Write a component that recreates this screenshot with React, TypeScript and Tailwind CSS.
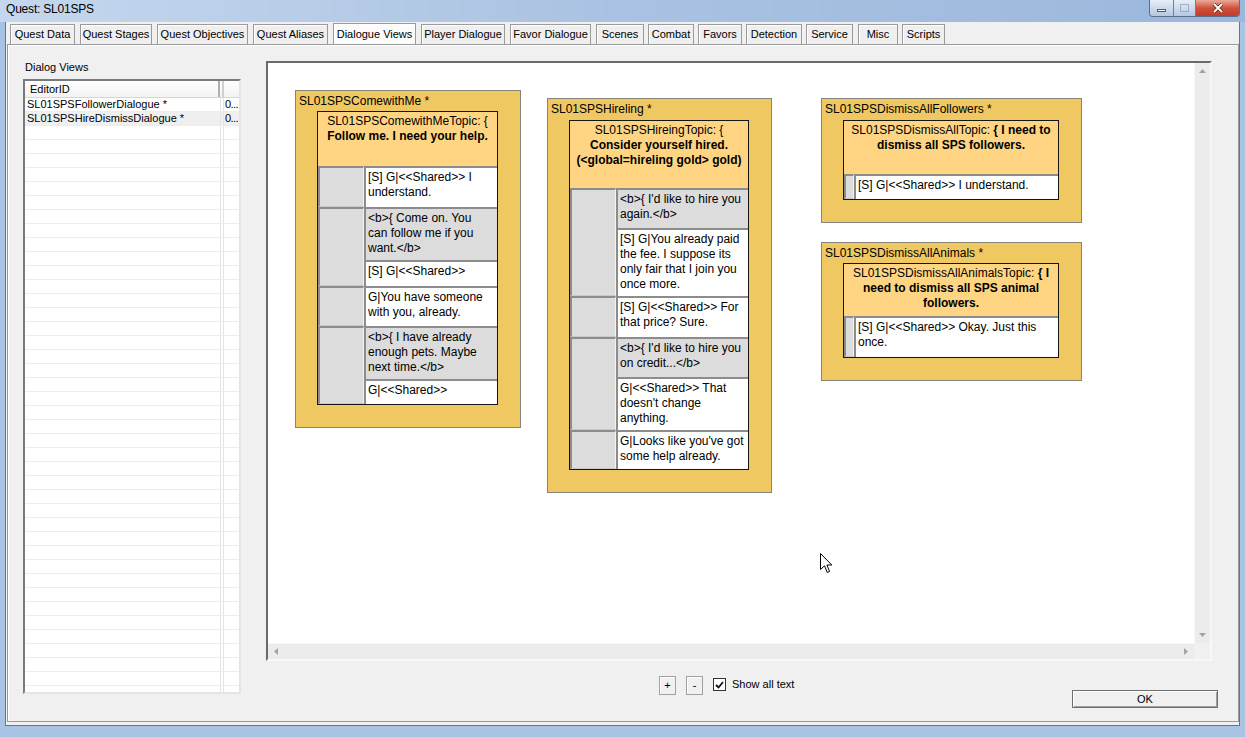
import React from "react";

type Seg = { t: string; b?: boolean };
type Cell = { lines: string[]; h: number; player?: boolean };
type DNode = {
  title: string;
  x: number;
  y: number;
  w: number;
  titleH: number;
  headerH: number;
  header: Seg[][];
  gutter: number;
  groups: Cell[][];
};

const nodes: DNode[] = [
  {
    title: "SL01SPSComewithMe *",
    x: 27,
    y: 27,
    w: 226,
    titleH: 20,
    headerH: 54,
    gutter: 46,
    header: [
      [{ t: "SL01SPSComewithMeTopic: {" }],
      [{ t: "Follow me. I need your help.", b: true }],
    ],
    groups: [
      [{ lines: ["[S] G|<<Shared>> I", "understand."], h: 41 }],
      [
        { lines: ["<b>{ Come on. You", "can follow me if you", "want.</b>"], h: 53, player: true },
        { lines: ["[S] G|<<Shared>>"], h: 26 },
      ],
      [{ lines: ["G|You have someone", "with you, already."], h: 40 }],
      [
        { lines: ["<b>{ I have already", "enough pets. Maybe", "next time.</b>"], h: 53, player: true },
        { lines: ["G|<<Shared>>"], h: 25 },
      ],
    ],
  },
  {
    title: "SL01SPSHireling *",
    x: 279,
    y: 35,
    w: 225,
    titleH: 21,
    headerH: 67,
    gutter: 46,
    header: [
      [{ t: "SL01SPSHireingTopic: {" }],
      [{ t: "Consider yourself hired.", b: true }],
      [{ t: "(<global=hireling gold> gold)", b: true }],
    ],
    groups: [
      [
        { lines: ["<b>{ I'd like to hire you", "again.</b>"], h: 40, player: true },
        {
          lines: ["[S] G|You already paid", "the fee. I suppose its", "only fair that I join you", "once more."],
          h: 68,
        },
      ],
      [{ lines: ["[S] G|<<Shared>> For", "that price? Sure."], h: 41 }],
      [
        { lines: ["<b>{ I'd like to hire you", "on credit...</b>"], h: 40, player: true },
        { lines: ["G|<<Shared>> That", "doesn't change", "anything."], h: 53 },
      ],
      [{ lines: ["G|Looks like you've got", "some help already."], h: 39 }],
    ],
  },
  {
    title: "SL01SPSDismissAllFollowers *",
    x: 553,
    y: 35,
    w: 261,
    titleH: 21,
    headerH: 53,
    gutter: 10,
    header: [
      [{ t: "SL01SPSDismissAllTopic: " }, { t: "{ I need to", b: true }],
      [{ t: "dismiss all SPS followers.", b: true }],
    ],
    groups: [[{ lines: ["[S] G|<<Shared>> I understand."], h: 25 }]],
  },
  {
    title: "SL01SPSDismissAllAnimals *",
    x: 553,
    y: 179,
    w: 261,
    titleH: 20,
    headerH: 52,
    gutter: 10,
    header: [
      [{ t: "SL01SPSDismissAllAnimalsTopic: " }, { t: "{ I", b: true }],
      [{ t: "need to dismiss all SPS animal", b: true }],
      [{ t: "followers.", b: true }],
    ],
    groups: [[{ lines: ["[S] G|<<Shared>> Okay. Just this", "once."], h: 41 }]],
  },
];

const tabs: { label: string; w: number; ml: number; active?: boolean }[] = [
  { label: "Quest Data", w: 65, ml: 3 },
  { label: "Quest Stages", w: 72, ml: 5 },
  { label: "Quest Objectives", w: 91, ml: 5 },
  { label: "Quest Aliases", w: 75, ml: 5 },
  { label: "Dialogue Views", w: 83, ml: 5, active: true },
  { label: "Player Dialogue", w: 84, ml: 5 },
  { label: "Favor Dialogue", w: 81, ml: 5 },
  { label: "Scenes", w: 48, ml: 5 },
  { label: "Combat", w: 46, ml: 4 },
  { label: "Favors", w: 44, ml: 4 },
  { label: "Detection", w: 56, ml: 4 },
  { label: "Service", w: 47, ml: 4 },
  { label: "Misc", w: 40, ml: 5 },
  { label: "Scripts", w: 43, ml: 4 },
];

function TitleBar() {
  return (
    <div className="relative flex h-[22px] shrink-0 items-start bg-gradient-to-r from-[#c4d7ee] via-[#a9c2e1] to-[#9ab7dc] pl-[6px] pt-[2px]">
      <span className="text-[12px] leading-[15px] tracking-[-0.2px] text-black">Quest: SL01SPS</span>
      <div className="absolute right-[5px] top-0 flex h-[17px] overflow-hidden rounded-b-[4px] border border-t-0 border-[#5b6f8c]">
        <div className="flex w-[24px] items-center justify-center border-r border-[#6b7f9c] bg-gradient-to-b from-[#e6eef8] to-[#b5c8e0]">
          <div className="mt-[5px] h-[3px] w-[9px] border border-[#4c5b70] bg-white" />
        </div>
        <div className="flex w-[22px] items-center justify-center border-r border-[#6b7f9c] bg-gradient-to-b from-[#e6eef8] to-[#b5c8e0]">
          <div className="h-[8px] w-[9px] border border-[#8090a8] bg-transparent opacity-60" />
        </div>
        <div className="flex w-[43px] items-center justify-center bg-gradient-to-b from-[#e9a99a] via-[#d0513c] to-[#c23d26]">
          <svg width="12" height="10" viewBox="0 0 12 10">
            <path d="M2 1 L10 9 M10 1 L2 9" stroke="#4a1a12" strokeWidth="3.2" />
            <path d="M2 1 L10 9 M10 1 L2 9" stroke="#ffffff" strokeWidth="2" />
          </svg>
        </div>
      </div>
    </div>
  );
}

function Tabs() {
  return (
    <div className="flex h-[22px] shrink-0 items-end">
      {tabs.map((t) => (
        <div
          key={t.label}
          className={`flex items-center justify-center whitespace-nowrap border border-b-0 border-[#9a9a9a] text-[11px] shadow-[inset_1px_1px_0_#ffffff] ${
            t.active ? "h-[21px] bg-[#fbfbfb]" : "h-[20px] bg-[#efefef]"
          }`}
          style={{ width: t.w, marginLeft: t.ml }}
        >
          {t.label}
        </div>
      ))}
    </div>
  );
}

function ListBox() {
  const rows = Array.from({ length: 43 });
  const items = ["SL01SPSFollowerDialogue *", "SL01SPSHireDismissDialogue *"];
  return (
    <div className="h-[615px] w-[218px] overflow-hidden border-2 border-t-[#7a7a7a] border-l-[#7a7a7a] border-r-[#e4e4e4] border-b-[#e4e4e4] bg-white">
      <div className="flex h-[17px] border-b border-[#d5d5d5] bg-gradient-to-b from-[#ffffff] to-[#f3f3f3] text-[11px]">
        <div className="flex w-[195px] items-center border-r-2 border-[#b0b0b0] pl-[5px]">EditorID</div>
        <div className="ml-[2px] w-[2px] bg-[#d0d0d0]" />
      </div>
      {rows.map((_, i) => (
        <div
          key={i}
          className={`flex h-[14px] border-b border-[#ececec] text-[11px] leading-[13px] ${i === 1 ? "bg-[#efefef]" : ""}`}
        >
          <div className="w-[196px] shrink-0 overflow-hidden whitespace-nowrap border-r border-[#e4e4e4] pl-[2px]">
            {items[i] ?? ""}
          </div>
          <div className="ml-[2px] flex-1 whitespace-nowrap border-l border-[#e4e4e4] pl-[1px] tracking-[-0.6px]">
            {items[i] ? "0..." : ""}
          </div>
        </div>
      ))}
    </div>
  );
}

function DialogueNode({ n }: { n: DNode }) {
  return (
    <div
      className="absolute border border-[#86857c] bg-[#f0c862]"
      style={{ left: n.x, top: n.y, width: n.w }}
    >
      <div className="whitespace-nowrap pl-[3px] text-[12px]" style={{ height: n.titleH, lineHeight: `${n.titleH}px` }}>
        {n.title}
      </div>
      <div className="mb-[22px] ml-[21px] mr-[22px] border border-[#151515] bg-white">
        <div className="bg-[#ffd583] pt-[2px] text-center text-[12px] leading-[15px]" style={{ height: n.headerH }}>
          {n.header.map((line, i) => (
            <div key={i} className="whitespace-nowrap">
              {line.map((s, j) => (
                <span key={j} className={s.b ? "font-bold" : ""}>
                  {s.t}
                </span>
              ))}
            </div>
          ))}
        </div>
        {n.groups.map((g, gi) => (
          <div key={gi} className="flex">
            <div
              className="shrink-0 border-l-2 border-t-2 border-r border-b border-l-[#8c8c8c] border-t-[#8c8c8c] border-r-[#f2f2f2] border-b-[#c8c8c8] bg-[#dcdcdc]"
              style={{ width: n.gutter }}
            />
            <div className="flex min-w-0 flex-1 flex-col">
              {g.map((c, ci) => (
                <div
                  key={ci}
                  className={`overflow-hidden border-l-2 border-t-2 border-[#8c8c8c] pl-[2px] pt-[2px] text-[12px] leading-[15px] ${
                    c.player ? "bg-[#dcdcdc]" : "bg-white"
                  }`}
                  style={{ height: c.h }}
                >
                  {c.lines.map((l, li) => (
                    <div key={li} className="whitespace-nowrap">
                      {l}
                    </div>
                  ))}
                </div>
              ))}
            </div>
          </div>
        ))}
      </div>
    </div>
  );
}

function Canvas() {
  return (
    <div className="flex h-[600px] w-[946px] flex-col border-2 border-t-[#6a6a6a] border-l-[#6a6a6a] border-r-[#f7f7f7] border-b-[#f7f7f7]">
      <div className="flex flex-1">
        <div className="relative flex-1 overflow-hidden bg-white">
          {nodes.map((n) => (
            <DialogueNode key={n.title} n={n} />
          ))}
          <svg className="absolute left-[552px] top-[490px]" width="13" height="21" viewBox="0 0 13 21">
            <path d="M0.5 0.5 L0.5 16.5 L4.5 12.8 L7.3 19.5 L9.6 18.5 L6.9 12 L11.8 12 Z" fill="#ffffff" stroke="#000000" strokeWidth="1" />
          </svg>
        </div>
        <div className="flex w-[16px] flex-col items-center justify-between border-l border-[#f8f8f8] bg-[#ececec] py-[6px]">
          <svg width="7" height="4" viewBox="0 0 7 4">
            <path d="M0 4 L3.5 0 L7 4 Z" fill="#a3a3a3" />
          </svg>
          <svg width="7" height="4" viewBox="0 0 7 4">
            <path d="M0 0 L3.5 4 L7 0 Z" fill="#a3a3a3" />
          </svg>
        </div>
      </div>
      <div className="flex h-[16px]">
        <div className="flex flex-1 items-center justify-between border-t border-[#f8f8f8] bg-[#ececec] px-[6px]">
          <svg width="4" height="7" viewBox="0 0 4 7">
            <path d="M4 0 L0 3.5 L4 7 Z" fill="#a3a3a3" />
          </svg>
          <svg width="4" height="7" viewBox="0 0 4 7">
            <path d="M0 0 L4 3.5 L0 7 Z" fill="#a3a3a3" />
          </svg>
        </div>
        <div className="w-[16px] bg-[#f0f0f0]" />
      </div>
    </div>
  );
}

function SmallButton({ label }: { label: string }) {
  return (
    <div className="flex h-[19px] w-[17px] items-center justify-center border border-[#a0a0a0] bg-[#f0f0f0] text-[11px] shadow-[inset_1px_1px_0_#ffffff]">
      {label}
    </div>
  );
}

export default function App() {
  return (
    <div className="flex h-[737px] w-[1245px] flex-col overflow-hidden bg-[#a8c3e3] font-['Liberation_Sans',Arial,sans-serif] text-black">
      <TitleBar />
      <div className="mx-[5px] flex h-[704px] flex-col border-x border-b border-[#62768f] bg-[#f0f0f0] pl-[1px]">
        <Tabs />
        <div className="flex h-[678px] border border-[#9a9a9a] bg-[#f0f0f0] pl-[15px] pt-[16px] shadow-[inset_1px_1px_0_#ffffff]">
          <div className="flex flex-col">
            <div className="h-[18px] pl-[2px] text-[11px] leading-[12px]">Dialog Views</div>
            <ListBox />
          </div>
          <div className="ml-[25px] flex w-[952px] flex-col">
            <Canvas />
            <div className="flex">
              <div className="mt-[15px] flex items-start">
                <div className="w-[393px]" />
                <SmallButton label="+" />
                <div className="ml-[10px]">
                  <SmallButton label="-" />
                </div>
                <div className="ml-[10px] mt-[2px] flex h-[13px] w-[13px] items-center justify-center border border-[#333333] bg-white">
                  <svg width="9" height="8" viewBox="0 0 9 8">
                    <path d="M1 4 L3.5 6.5 L8 1" fill="none" stroke="#111111" strokeWidth="1.8" />
                  </svg>
                </div>
                <div className="ml-[6px] text-[11px] leading-[16px]">Show all text</div>
              </div>
              <div className="ml-auto mt-[29px] flex h-[18px] w-[146px] items-center justify-center border border-[#6f6f6f] bg-[#f0f0f0] text-[11px] shadow-[inset_1px_1px_0_#ffffff,inset_-1px_-1px_0_#a0a0a0]">
                OK
              </div>
            </div>
          </div>
        </div>
      </div>
    </div>
  );
}
